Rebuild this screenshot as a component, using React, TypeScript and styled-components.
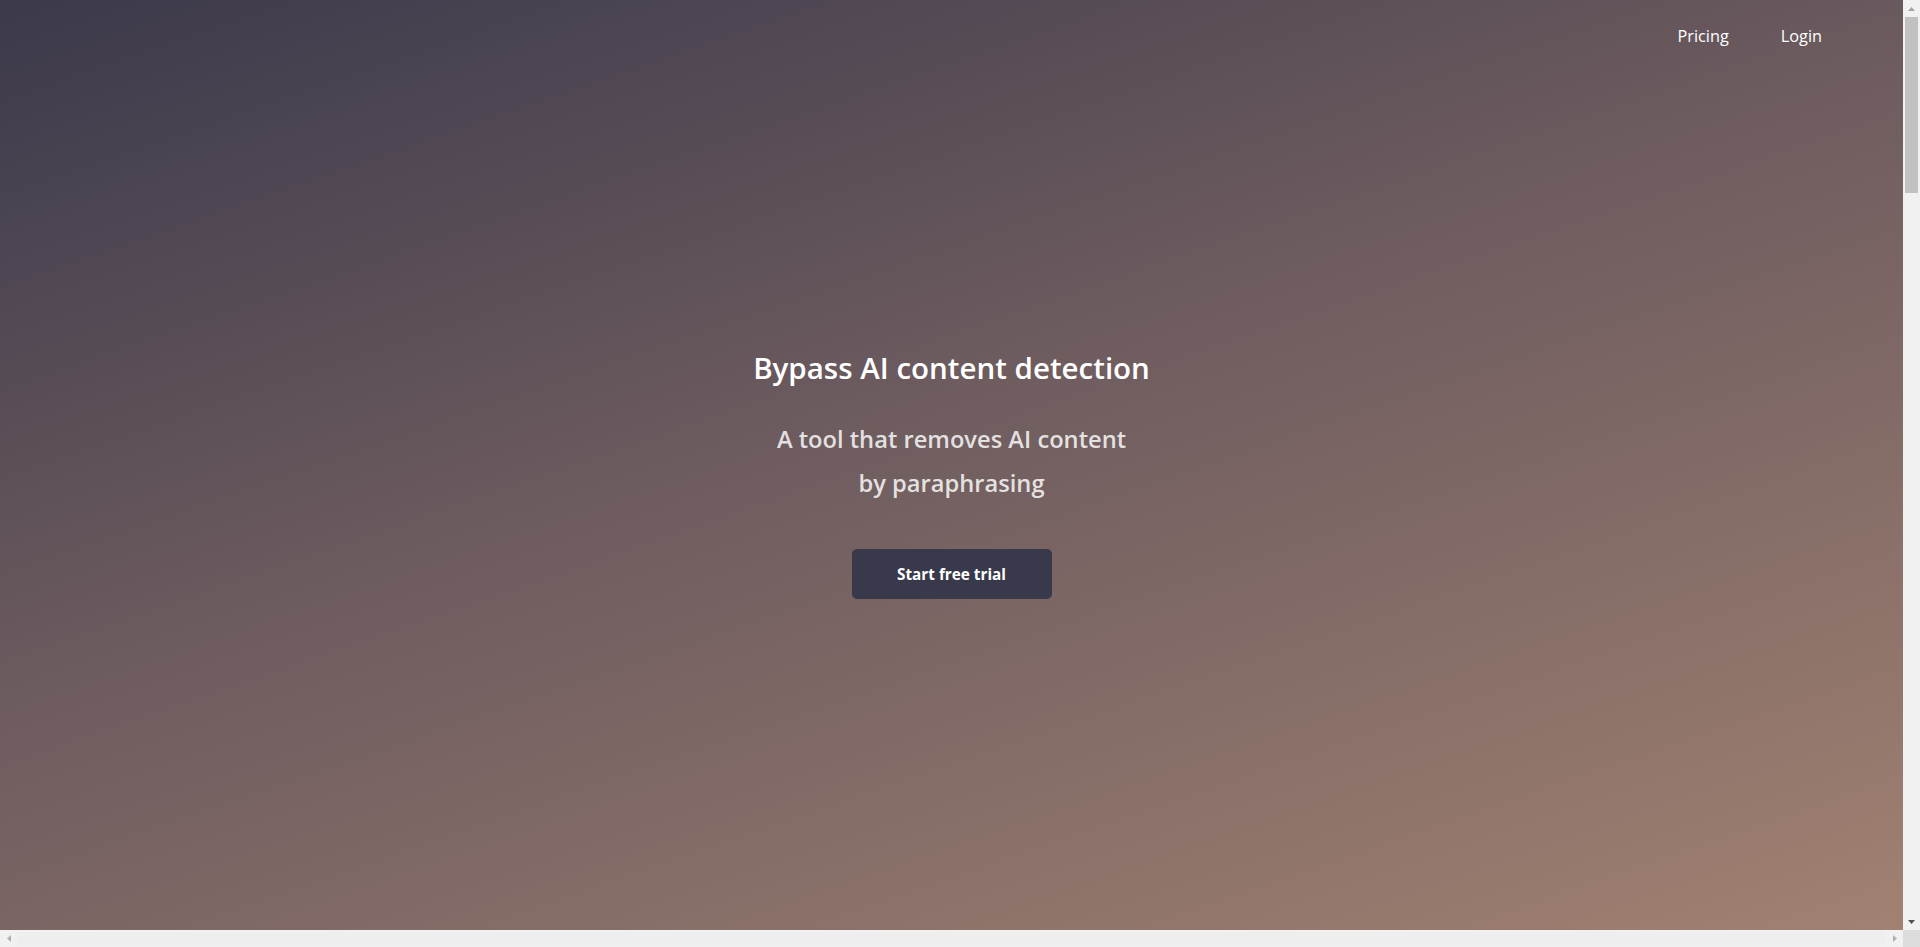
import React from "react";
import styled, { createGlobalStyle } from "styled-components";

const Global = createGlobalStyle`
  html, body {
    margin: 0;
    padding: 0;
    overflow: hidden;
  }
  body {
    font-family: "Open Sans", "Noto Sans", sans-serif;
    background: #ffffff;
  }
  * { box-sizing: border-box; }
`;

const Frame = styled.div`
  width: 100vw;
  height: 100vh;
  display: grid;
  grid-template-columns: 1fr 17px;
  grid-template-rows: 1fr 17px;
`;

const Pane = styled.div`
  overflow: hidden;
  min-width: 0;
  min-height: 0;
`;

const Hero = styled.section`
  width: 100%;
  height: 100vh;
  display: flex;
  flex-direction: column;
  background: linear-gradient(161deg, #3b394b 0%, #6e5c5f 45%, #a28272 100%);
`;

const Nav = styled.header`
  height: 72px;
  display: flex;
  align-items: center;
  justify-content: flex-end;
  gap: 52px;
  padding-right: 81px;
`;

const NavLink = styled.a`
  color: #ffffff;
  font-size: 16.3px;
  font-weight: 400;
  text-decoration: none;
  cursor: pointer;
`;

const Main = styled.main`
  flex: 1;
  margin-bottom: 72px;
  display: flex;
  flex-direction: column;
  align-items: center;
  justify-content: center;
  text-align: center;
`;

const Title = styled.h1`
  margin: 0;
  color: #ffffff;
  font-size: 29.5px;
  line-height: 40px;
  font-weight: 600;
`;

const Subtitle = styled.p`
  margin: 29px 0 0;
  color: rgba(255, 255, 255, 0.82);
  font-size: 23.7px;
  line-height: 44px;
  font-weight: 600;
`;

const Button = styled.button`
  margin-top: 44px;
  width: 200px;
  height: 50px;
  border: none;
  border-radius: 5px;
  background: #383a4b;
  color: #ffffff;
  font-family: inherit;
  font-size: 15.3px;
  font-weight: 700;
  cursor: pointer;
`;

const ScrollbarV = styled.div`
  background: #f1f1f1;
  display: grid;
  grid-template-rows: 17px 1fr 17px;
`;

const ScrollbarH = styled.div`
  background: #f1f1f1;
  display: grid;
  grid-template-columns: 17px 1fr 17px;
`;

const Corner = styled.div`
  background: #dcdcdc;
`;

const ArrowButton = styled.div`
  display: flex;
  align-items: center;
  justify-content: center;
`;

const TrackV = styled.div`
  padding: 0 2px;
`;

const ThumbV = styled.div<{ $size: number }>`
  height: ${(p) => p.$size}px;
  background: #c1c1c1;
`;

const TrackH = styled.div`
  padding: 2px 0;
`;

const ThumbH = styled.div`
  height: 100%;
  width: 100%;
  background: #eeeeee;
`;

function Arrow({ dir, color }: { dir: "up" | "down" | "left" | "right"; color: string }) {
  const pts = {
    up: "0,4 7,4 3.5,0",
    down: "0,0 7,0 3.5,4",
    left: "4,0 4,7 0,3.5",
    right: "0,0 0,7 4,3.5",
  }[dir];
  const vertical = dir === "up" || dir === "down";
  return (
    <svg width={vertical ? 7 : 4} height={vertical ? 4 : 7} viewBox={vertical ? "0 0 7 4" : "0 0 4 7"}>
      <polygon points={pts} fill={color} />
    </svg>
  );
}

export default function App() {
  return (
    <>
      <Global />
      <Frame>
        <Pane>
          <Hero>
            <Nav>
              <NavLink>Pricing</NavLink>
              <NavLink>Login</NavLink>
            </Nav>
            <Main>
              <Title>Bypass AI content detection</Title>
              <Subtitle>
                A tool that removes AI content
                <br />
                by paraphrasing
              </Subtitle>
              <Button>Start free trial</Button>
            </Main>
          </Hero>
        </Pane>
        <ScrollbarV>
          <ArrowButton>
            <Arrow dir="up" color="#a3a3a3" />
          </ArrowButton>
          <TrackV>
            <ThumbV $size={176} />
          </TrackV>
          <ArrowButton>
            <Arrow dir="down" color="#505050" />
          </ArrowButton>
        </ScrollbarV>
        <ScrollbarH>
          <ArrowButton>
            <Arrow dir="left" color="#b0b0b0" />
          </ArrowButton>
          <TrackH>
            <ThumbH />
          </TrackH>
          <ArrowButton>
            <Arrow dir="right" color="#b0b0b0" />
          </ArrowButton>
        </ScrollbarH>
        <Corner />
      </Frame>
    </>
  );
}
